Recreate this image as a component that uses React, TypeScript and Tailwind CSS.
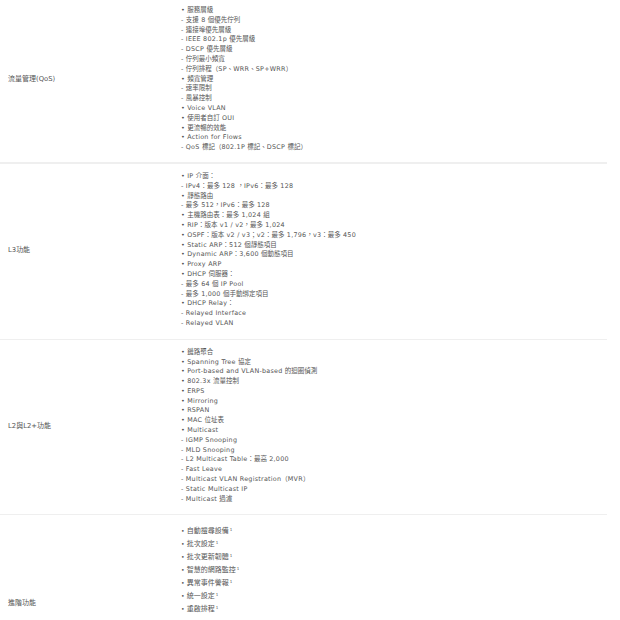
import React from 'react';

// Spec rows: label on the left, list of features on the right
type Row = {
  label: string;
  lines: string[];
  pad: string;
};

const rows: Row[] = [
  {
    label: '流量管理(QoS)',
    pad: 'pt-[6px] pb-[9px]',
    lines: [
      '• 服務層級',
      '- 支援 8 個優先佇列',
      '- 連接埠優先層級',
      '- IEEE 802.1p 優先層級',
      '- DSCP 優先層級',
      '- 佇列最小頻寬',
      '- 佇列排程（SP、WRR、SP+WRR）',
      '• 頻寬管理',
      '- 速率限制',
      '- 風暴控制',
      '• Voice VLAN',
      '• 使用者自訂 OUI',
      '• 更流暢的效能',
      '• Action for Flows',
      '- QoS 標記（802.1P 標記、DSCP 標記）',
    ],
  },
  {
    label: 'L3功能',
    pad: 'pt-[8px] pb-[10px]',
    lines: [
      '• IP 介面：',
      '- IPv4：最多 128 ，IPv6：最多 128',
      '• 靜態路由',
      '- 最多 512，IPv6：最多 128',
      '• 主機路由表：最多 1,024 組',
      '• RIP：版本 v1 / v2，最多 1,024',
      '• OSPF：版本 v2 / v3；v2：最多 1,796，v3：最多 450',
      '• Static ARP：512 個靜態項目',
      '• Dynamic ARP：3,600 個動態項目',
      '• Proxy ARP',
      '• DHCP 伺服器：',
      '- 最多 64 個 IP Pool',
      '- 最多 1,000 個手動綁定項目',
      '• DHCP Relay：',
      '- Relayed Interface',
      '- Relayed VLAN',
    ],
  },
  {
    label: 'L2與L2+功能',
    pad: 'pt-[8px] pb-[10px]',
    lines: [
      '• 鏈路聚合',
      '• Spanning Tree 協定',
      '• Port-based and VLAN-based 的迴圈偵測',
      '• 802.3x 流量控制',
      '• ERPS',
      '• Mirroring',
      '• RSPAN',
      '• MAC 位址表',
      '• Multicast',
      '- IGMP Snooping',
      '- MLD Snooping',
      '- L2 Multicast Table：最高 2,000',
      '- Fast Leave',
      '- Multicast VLAN Registration（MVR）',
      '- Static Multicast IP',
      '- Multicast 過濾',
    ],
  },
];

const advanced = [
  '自動搜尋設備',
  '批次設定',
  '批次更新韌體',
  '智慧的網路監控',
  '異常事件警報',
  '統一設定',
  '重啟排程',
];

// latin runs get their own size/tracking, CJK runs keep the parent size
function Mixed({ text, latin }: { text: string; latin: string }) {
  const parts = text.split(/([\u0000-\u024F]+)/).filter(Boolean);
  return (
    <>
      {parts.map((p, i) =>
        /^[\u0000-\u024F]+$/.test(p) ? (
          <span key={i} className={latin}>
            {p}
          </span>
        ) : (
          <span key={i}>{p}</span>
        )
      )}
    </>
  );
}

export default function App() {
  return (
    <div
      className="w-[620px] h-[620px] overflow-hidden bg-white text-[#555]"
      style={{ fontFamily: '"DejaVu Sans", "Noto Sans CJK TC", sans-serif' }}
    >
      <div className="w-[607px]">
        {rows.map((row, i) => (
          <div
            key={row.label}
            className={`grid grid-cols-[181px_1fr] items-center ${row.pad} ${i === 0 ? 'border-b-2' : 'border-b'} border-[#efefef]`}
          >
            <div className="pl-[8px] text-[7px]">
              <Mixed text={row.label} latin="text-[6.8px]" />
            </div>
            <ul className="text-[6.5px]">
              {row.lines.map((line, j) => (
                <li key={j} className="h-[9.8px] leading-[9.8px] whitespace-nowrap">
                  <Mixed text={line} latin="text-[6.4px] tracking-[0.25px]" />
                </li>
              ))}
            </ul>
          </div>
        ))}

        {/* 進階功能 */}
        <div className="grid grid-cols-[181px_1fr] items-center min-h-[175px]">
          <div className="pl-[8px] text-[7px]">進階功能</div>
          <ul className="self-start pt-[9px] text-[7px]">
            {advanced.map((item) => (
              <li key={item} className="h-[13px] leading-[13px] whitespace-nowrap">
                <span className="text-[6px]">•</span> {item}
                <sup className="text-[4px] ml-[1px]">1</sup>
              </li>
            ))}
          </ul>
        </div>
      </div>
    </div>
  );
}
